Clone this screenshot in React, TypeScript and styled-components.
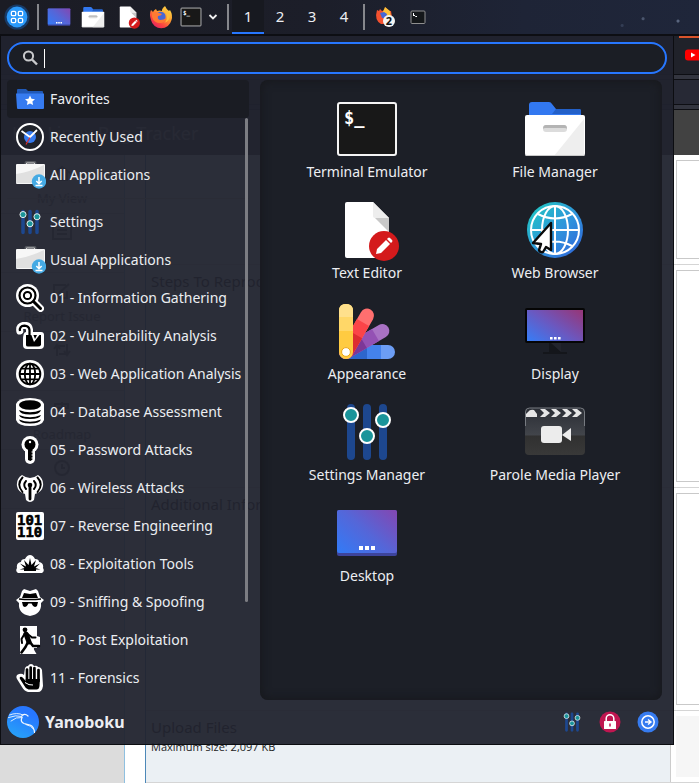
import React from 'react';
import styled, { createGlobalStyle, css } from 'styled-components';

const GlobalStyle = createGlobalStyle`
  *, *::before, *::after { box-sizing: border-box; }
  html, body { margin: 0; padding: 0; }
  body { background: #ffffff; font-family: 'Noto Sans', 'Open Sans', sans-serif; font-size: 14px; color: #eceef2; }
  button, input, textarea { font: inherit; color: inherit; }
`;

/* ---------- desktop shell ---------- */

const Desktop = styled.div`
  display: flex;
  flex-direction: column;
  min-height: 100vh;
  overflow: hidden;
`;

const Stage = styled.div`
  display: grid;
  grid-template-columns: minmax(0, 1fr);
  flex: 1;
  > * { grid-area: 1 / 1; }
`;

const resetButton = css`
  display: flex;
  align-items: center;
  border: 0;
  margin: 0;
  padding: 0;
  background: none;
  cursor: pointer;
`;

/* ---------- top panel ---------- */

const TopPanel = styled.header`
  display: flex;
  align-items: center;
  height: 36px;
  padding: 0 0 0 4px;
  border-bottom: 2px solid #0d0e13;
  background:
    radial-gradient(circle at 92% 55%, #4a556d 0 1px, transparent 2px),
    radial-gradient(circle at 97% 62%, #59657e 0 1px, transparent 2px),
    radial-gradient(circle at 89% 75%, #333d54 0 1px, transparent 2px),
    linear-gradient(90deg, #1b1c24 0%, #1c1e29 45%, #1e2436 75%, #1f263a 100%);
`;

const PanelButton = styled.button<{ $w: number }>`
  ${resetButton}
  justify-content: center;
  width: ${(p) => p.$w}px;
  height: 34px;
`;

const PanelDivider = styled.span<{ $gap: number }>`
  width: 2px;
  height: 26px;
  margin: 0 ${(p) => p.$gap}px;
  background: #86878c;
`;

const Workspace = styled.button<{ $active?: boolean }>`
  ${resetButton}
  justify-content: center;
  align-self: flex-start;
  width: 32px;
  height: 34px;
  font-size: 15px;
  border-bottom: 2px solid ${(p) => (p.$active ? '#2777ff' : 'transparent')};
  background: ${(p) => (p.$active ? '#171920' : 'transparent')};
`;

const Workspaces = styled.nav`
  display: flex;
`;

/* ---------- web page under the menu ---------- */

const Page = styled.div`
  display: flex;
  flex-direction: column;
  color: #2b2b2b;
  background: #ffffff;
  font-size: 15px;
`;

const TabStrip = styled.div`
  display: flex;
  justify-content: flex-end;
  height: 39px;
  border-bottom: 1px solid #0d0e13;
  background: #20222a;
`;

const BrowserTab = styled.div`
  display: flex;
  align-items: center;
  width: 20px;
  padding: 0 0 3px 6px;
  border-top: 2px solid #d8532c;
  overflow: hidden;
  svg { flex: none; }
`;

const ToolStrip = styled.div`
  padding: 4px 0;
  background: #33353f;
  border-bottom: 1px solid #0d0e13;
`;

const AddressBar = styled.div`
  height: 26px;
  border: 1px solid #0d0e13;
  border-width: 1px 0;
  background: #272935;
`;

const SiteHeader = styled.div`
  display: flex;
  align-items: center;
  height: 45px;
  padding-left: 12px;
  background: #424242;
  color: #a0a0a0;
  font-size: 18px;
`;

const SiteBody = styled.div`
  display: grid;
  grid-template-columns: 125px minmax(0, 1fr);
  column-gap: 20px;
  flex: 1;
`;

const SiteNav = styled.nav`
  display: flex;
  flex-direction: column;
  border-right: 1px solid #8fc0e0;
  background: #dcdcdc;
`;

const SiteLink = styled.a`
  display: flex;
  flex-direction: column;
  align-items: center;
  gap: 6px;
  height: 59px;
  padding-top: 9px;
  border-bottom: 1px solid #c4c4c4;
  color: #777777;
  font-size: 13px;
  line-height: 20px;
  text-decoration: none;
`;

const Form = styled.div`
  display: flex;
  flex-direction: column;
  border-left: 1px solid #4d88b8;
`;

const FormRow = styled.div<{ $h?: number }>`
  display: grid;
  grid-template-columns: minmax(0, 1fr) 28px;
  ${(p) => (p.$h ? `height: ${p.$h}px;` : 'flex: 1;')}
  border-bottom: 1px solid #d5d5d5;
`;

const FormLabel = styled.label`
  padding: 5px;
  border-right: 1px solid #cccccc;
  background: #ebf0f4;
  line-height: 22px;
`;

const Hint = styled.small`
  display: block;
  color: #222222;
  font: 11px/18px 'Open Sans', sans-serif;
`;

const FieldCell = styled.div`
  display: flex;
  padding: 5px 0 5px 5px;
  overflow: hidden;
`;

const Field = styled.textarea`
  flex: none;
  width: 60px;
  border: 1px solid #c9c9c9;
  background: #ffffff;
  resize: none;
`;

const DropArea = styled.div`
  flex: 1;
  background: #f6f6f6;
`;

/* ---------- menu window ---------- */

const MenuWindow = styled.section`
  position: relative;
  align-self: start;
  display: flex;
  flex-direction: column;
  margin-right: 25px;
  padding: 6px 6px 0;
  border: 1px solid #0c0d11;
  border-top: 0;
  background: rgba(33, 35, 46, 0.95);
`;

const SearchBox = styled.label`
  display: flex;
  align-items: center;
  height: 32px;
  padding: 0 12px 0 13px;
  border: 2px solid #2777ff;
  border-radius: 16px;
  background: #1b1e25;
`;

const Caret = styled.span`
  width: 1px;
  height: 19px;
  margin-left: 6px;
  background: #ffffff;
`;

const SearchInput = styled.input`
  flex: 1;
  min-width: 0;
  border: 0;
  outline: 0;
  padding: 0;
  background: transparent;
`;

const MenuBody = styled.div`
  display: grid;
  grid-template-columns: 242px minmax(0, 1fr);
  column-gap: 11px;
  margin-top: 6px;
  padding-right: 5px;
`;

const Categories = styled.nav`
  display: grid;
  grid-template-columns: minmax(0, 1fr) 4px;
`;

const CategoryList = styled.div`
  grid-area: 1 / 1 / 2 / 3;
  display: flex;
  flex-direction: column;
`;

const Category = styled.button<{ $selected?: boolean }>`
  ${resetButton}
  gap: 6px;
  height: 38px;
  padding: 0 0 0 9px;
  border-radius: 4px;
  line-height: 20px;
  white-space: nowrap;
  background: ${(p) => (p.$selected ? '#1a1c23' : 'transparent')};
  svg { flex: none; }
`;

const Rule = styled.hr`
  width: 100%;
  height: 1px;
  margin: 4px 0;
  border: 0;
  background: #2a2c36;
`;

const ScrollThumb = styled.span`
  grid-area: 1 / 2;
  width: 3px;
  height: 484px;
  margin-top: 38px;
  border-radius: 2px;
  background: #7c7d83;
`;

const AppPanel = styled.div`
  display: grid;
  grid-template-columns: repeat(2, minmax(0, 1fr));
  align-content: start;
  min-height: 620px;
  padding: 9px 13px;
  border-radius: 8px;
  background: #1c1f27;
  box-shadow: inset 0 0 10px 1px #17181c;
`;

const AppTile = styled.button`
  ${resetButton}
  flex-direction: column;
  height: 101px;
  padding-top: 8px;
  line-height: 22px;
  svg { flex: none; }
`;

const MenuFooter = styled.footer`
  display: flex;
  align-items: center;
  height: 44px;
`;

const UserButton = styled.button`
  ${resetButton}
  gap: 6px;
  font-size: 16px;
  font-weight: 700;
  margin-right: auto;
`;

const ActionButton = styled.button`
  ${resetButton}
  justify-content: center;
  width: 38px;
  height: 38px;
`;

/* ---------- shared drawings ---------- */

type IconProps = { size?: number };

const Svg = ({ size = 28, box = 28, children }: { size?: number; box?: number; children: React.ReactNode }) => (
  <svg width={size} height={size} viewBox={`0 0 ${box} ${box}`} fill="none" aria-hidden="true">
    {children}
  </svg>
);

const DesktopIcon = ({ size = 64 }: IconProps) => (
  <Svg size={size} box={64}>
    <defs>
      <linearGradient id={`desk${size}`} x1="0" y1="0.9" x2="1" y2="0.1">
        <stop offset="0" stopColor="#3579f4" />
        <stop offset="0.5" stopColor="#5566d8" />
        <stop offset="1" stopColor="#8049b4" />
      </linearGradient>
    </defs>
    <rect x="2" y="9" width="60" height="46" rx="2" fill="#3d449c" />
    <rect x="2" y="9" width="60" height="43" rx="2" fill={`url(#desk${size})`} />
    <path d="M24 45h4v4h-4zM30 45h4v4h-4zM36 45h4v4h-4z" fill="#fff" />
  </Svg>
);

const FolderIcon = ({ size = 64 }: IconProps) => (
  <Svg size={size} box={64}>
    <path d="M6 30V8q0-3 3-3h17q2 0 3 2l4 5h23q2 0 2 2v16z" fill="#3278f0" />
    <path d="M33 12h23q2 0 2 2v3H29z" fill="#2360c8" />
    <rect x="2" y="18" width="60" height="41" rx="2" fill="#fff" />
    <path d="M61 22v35q0 2-2 2H31z" fill="#eeeeee" />
    <path d="M2 57q0 2 2 2h56q2 0 2-2v-1q0 2-2 2H4q-2 0-2-2z" fill="#c9c9c9" />
    <rect x="20" y="28" width="24" height="7" rx="3" fill="#dcdcdc" />
    <path d="M20 32q0-4 3-4h18q3 0 3 4q0-1-3-1H23q-3 0-3 1z" fill="#b4b4b4" />
  </Svg>
);

const EditorIcon = ({ size = 64 }: IconProps) => (
  <Svg size={size} box={64}>
    <path d="M10 6q0-2 2-2h26l16 16v38q0 2-2 2H12q-2 0-2-2z" fill="#fff" />
    <path d="M38 18l16 16V20H40z" fill="#c8c8c8" />
    <path d="M38 4l16 16H40q-2 0-2-2z" fill="#ededed" />
    <circle cx="49" cy="48" r="15" fill="#d41a1c" />
    <path d="M41 56l1-5 9-9 4 4-9 9zM52 41l1-1q1-1 2 0l2 2q1 1 0 2l-1 1z" fill="#fff" />
  </Svg>
);

const TerminalIcon = ({ size = 64 }: IconProps) => (
  <Svg size={size} box={64}>
    <rect x="3" y="6" width="58" height="52" rx="2" fill="#181818" stroke="#f4f4f4" strokeWidth="2" />
    <text x="9" y="27" fill="#fff" fontFamily="'DejaVu Sans Mono', monospace" fontWeight="700" fontSize="17">$_</text>
  </Svg>
);

const WebIcon = () => (
  <Svg size={64} box={64}>
    <defs>
      <linearGradient id="web" x1="0" y1="0" x2="1" y2="1">
        <stop offset="0.1" stopColor="#22c3c4" />
        <stop offset="0.55" stopColor="#2f93dc" />
        <stop offset="1" stopColor="#2f5fd8" />
      </linearGradient>
    </defs>
    <circle cx="32" cy="32" r="28" fill="url(#web)" />
    <g stroke="#fff" strokeWidth="2">
      <circle cx="32" cy="32" r="24" />
      <ellipse cx="32" cy="32" rx="13" ry="24" />
      <path d="M32 8v48M8 32h48M15 16q17 9 34 0M15 48q17-9 34 0" />
    </g>
    <path d="M28 25V52l-5-3-3 5q-3 1-4-2l2-6-8-1z" fill="#fff" stroke="#0a0a0a" strokeWidth="2.4" strokeLinejoin="round" />
  </Svg>
);

const AppearanceIcon = () => (
  <Svg size={64} box={64}>
    <rect x="4" y="46" width="56" height="14" rx="7" fill="#6c9df4" />
    <path d="M11 46h35v14H11z" fill="#4482ec" />
    <path d="M11 46h21v14H11z" fill="#2d66cc" />
    <g transform="rotate(60 11 53)">
      <rect x="4" y="4" width="14" height="56" rx="7" fill="#a972c4" />
      <path d="M4 19h14v34H4z" fill="#9451b4" />
      <path d="M4 33h14v20H4z" fill="#7c3797" />
    </g>
    <g transform="rotate(30 11 53)">
      <rect x="4" y="4" width="14" height="56" rx="7" fill="#ff6f6f" />
      <path d="M4 19h14v34H4z" fill="#fb4448" />
      <path d="M4 33h14v20H4z" fill="#dd2c30" />
    </g>
    <rect x="4" y="5" width="14" height="55" rx="7" fill="#ffcb41" />
    <path d="M4 32V12q0-7 7-7t7 7v20z" fill="#ffd768" />
    <path d="M4 18v-6q0-7 7-7t7 7v6z" fill="#ffe08c" />
    <circle cx="11" cy="53" r="4.4" fill="#fff" stroke="#eda718" strokeWidth="1" />
  </Svg>
);

const DisplayIcon = () => (
  <Svg size={64} box={64}>
    <defs>
      <linearGradient id="disp" x1="0" y1="0.9" x2="1" y2="0.1">
        <stop offset="0" stopColor="#3b7af2" />
        <stop offset="0.5" stopColor="#6c57be" />
        <stop offset="1" stopColor="#94387c" />
      </linearGradient>
    </defs>
    <path d="M26 43h12v10h6v2H20v-2h6z" fill="#14161b" />
    <path d="M28 44l10 9v-9z" fill="#22242c" />
    <rect x="2" y="9" width="60" height="35" rx="2" fill="#050505" />
    <rect x="4" y="11" width="56" height="31" fill="url(#disp)" />
    <path d="M27 38h2.600v2.600H27zM31 38h2.600v2.600H31zM35 38h2.600v2.600H35z" fill="#fff" />
  </Svg>
);

const SlidersIcon = ({ size = 64 }: IconProps) => (
  <Svg size={size} box={64}>
    <path d="M16 8v48M32 8v48M48 8v48" stroke="#1d478e" strokeWidth="8" strokeLinecap="round" />
    <g fill="#1a949a" stroke="#fff" strokeWidth="2">
      <circle cx="16" cy="15" r="7" />
      <circle cx="32" cy="36" r="7" />
      <circle cx="48" cy="20" r="7" />
    </g>
  </Svg>
);

const ParoleIcon = () => (
  <Svg size={64} box={64}>
    <defs>
      <linearGradient id="clap" x1="0" y1="0" x2="0" y2="1">
        <stop offset="0" stopColor="#2b2e35" />
        <stop offset="0.58" stopColor="#42454b" />
        <stop offset="0.59" stopColor="#303030" />
        <stop offset="1" stopColor="#393939" />
      </linearGradient>
    </defs>
    <rect x="2" y="8" width="60" height="47" rx="4" fill="url(#clap)" />
    <path d="M2.500 26V12q0-4 4-4h51q4 0 4 4v14" stroke="#777b81" strokeWidth="1" />
    <path d="M3 17v-3q1-1 2-2 2-3 6-2l3 4v3z" fill="#e6e6e6" />
    <path d="M17 9h5l5 4-5 4h-5l4-4zM28 9h5l5 4-5 4h-5l4-4zM39 9h5l5 4-5 4h-5l4-4zM49 9h5l5 4-5 4h-5l4-4z" fill="#e6e6e6" />
    <rect x="18" y="26" width="21" height="17" rx="3" fill="#ececec" />
    <path d="M39 35l9-7v13z" fill="#ececec" />
  </Svg>
);

const FirefoxIcon = ({ size = 24 }: IconProps) => (
  <Svg size={size} box={24}>
    <defs>
      <linearGradient id={`fox${size}`} x1="0.85" y1="0.05" x2="0.2" y2="0.95">
        <stop offset="0" stopColor="#ffe04a" />
        <stop offset="0.4" stopColor="#ff9a2e" />
        <stop offset="0.75" stopColor="#fb4340" />
        <stop offset="1" stopColor="#e32463" />
      </linearGradient>
    </defs>
    <path d="M2 5l2 2q1-2 3-3l1 2q3-1 5 0 0-3 3-5 1 3 4 5l1-1q3 5 1.500 10A10.500 10.500 0 0 1 2 15Q0 9 2 5z" fill={`url(#fox${size})`} />
    <path d="M8 8q5-3 8 1 2 5-2 7-5 1-7-3-1-3 1-5z" fill="#4a68d4" />
    <path d="M3 8q4-2 7 0l3 1q-1 2-4 2-1 3 2 4 4 0 6-2-1 5-6 5-6 0-8-6z" fill="#ff7a33" />
    <path d="M13 6q5 1 5 6 0 4-3 6 6-2 6-8-1-3-5-8-3 1-3 4z" fill="#ffbe3b" />
  </Svg>
);

const LauncherIcon = () => (
  <Svg size={30} box={30}>
    <circle cx="15" cy="15" r="14.500" fill="#1572e0" opacity="0.35" />
    <circle cx="15" cy="15" r="12" fill="#2b9afb" />
    <g stroke="#fff" strokeWidth="1.500" fill="#238af0">
      <rect x="8.500" y="8.500" width="5" height="5" rx="1.500" />
      <rect x="16.500" y="8.500" width="5" height="5" rx="1.500" />
      <rect x="8.500" y="16.500" width="5" height="5" rx="1.500" />
      <rect x="16.500" y="16.500" width="5" height="5" rx="1.500" />
    </g>
  </Svg>
);

const ChevronIcon = () => (
  <Svg size={10} box={10}>
    <path d="M1.500 3L5 6.500 8.500 3" stroke="#f0f0f0" strokeWidth="1.800" />
  </Svg>
);

const FirefoxTaskIcon = () => (
  <Svg size={22} box={22}>
    <path d="M3 4l2 1 1-2 2 2 3-1V1l4 4 2 0 1 6-5 7-6 0Q0 14 3 4z" fill="#f4512f" />
    <path d="M11 1l5 4 1 6-5 3-4-6z" fill="#ffc039" />
    <path d="M6 7l4-1 3 2-1 4H8z" fill="#4566d6" />
    <circle cx="15" cy="15" r="6" fill="#f4f4f4" />
    <text x="15" y="19" textAnchor="middle" fill="#111" fontFamily="'Noto Sans', sans-serif" fontWeight="700" fontSize="11">2</text>
  </Svg>
);

const TerminalTaskIcon = () => (
  <Svg size={16} box={16}>
    <rect x="1" y="2" width="14" height="12.500" rx="1" fill="#14171a" stroke="#8f8f8f" />
    <path d="M3.500 4v3M3.500 5.500l2 2h1.500" stroke="#fff" />
  </Svg>
);

const YoutubeIcon = () => (
  <svg width="16" height="12" viewBox="0 0 16 12" aria-hidden="true">
    <rect width="16" height="11" y="0.500" rx="3" fill="#fe0000" />
    <path d="M6 3.500l4.500 2.500L6 8.500z" fill="#fff" />
  </svg>
);

const SearchIcon = () => (
  <Svg size={16} box={16}>
    <circle cx="6.500" cy="6" r="4.600" stroke="#c9cacc" strokeWidth="2" />
    <path d="M10 9.500l5 5" stroke="#c9cacc" strokeWidth="2.400" />
  </Svg>
);

const LockIcon = () => (
  <Svg size={22} box={22}>
    <circle cx="11" cy="11" r="10.500" fill="#bf1650" />
    <path d="M7.200 10V7.500a3.800 3.800 0 0 1 7.600 0V10" stroke="#fff" strokeWidth="1.500" />
    <rect x="5" y="10" width="12" height="8" rx="0.500" fill="#fff" />
    <path d="M11 12.500v3" stroke="#bf1650" strokeWidth="1.500" />
  </Svg>
);

const LogoutIcon = () => (
  <Svg size={22} box={22}>
    <circle cx="11" cy="11" r="10.500" fill="#367bf0" />
    <circle cx="11" cy="11" r="6.200" stroke="#fff" strokeWidth="1.500" />
    <path d="M8 11h5M11 8.500l3 2.500-3 2.500" stroke="#fff" strokeWidth="1.400" />
  </Svg>
);

const AvatarIcon = () => (
  <Svg size={32} box={32}>
    <defs>
      <linearGradient id="ava" x1="0.7" y1="0" x2="0.2" y2="1">
        <stop offset="0.2" stopColor="#2777ff" />
        <stop offset="1" stopColor="#27a4f8" />
      </linearGradient>
    </defs>
    <circle cx="16" cy="16" r="16" fill="url(#ava)" />
    <g stroke="#f2f8ff" strokeWidth="0.900" strokeLinecap="round">
      <path d="M2.500 9Q10 6 16 9M1.500 11.500Q9 8.500 15 10.500M4 15Q9 10.500 15 11.500" />
      <path d="M15 9.500q3-2.500 6 .5M15 11.500q-2 4.500 2 6 3 1 6 1.500 4 1.500 4.500 7.500" strokeWidth="1.200" />
      <path d="M19 18.500q5 1 7.500 4.500" />
    </g>
  </Svg>
);

/* ---------- category drawings ---------- */

const FavoritesIcon = () => (
  <Svg>
    <path d="M1 9V5q0-1 1-1h8l2 2h14q1 0 1 1v4z" fill="#2059b8" />
    <path d="M0 8.500h28V23q0 1-1 1H2q-1 0-1-1z" fill="#367bf0" />
    <path d="M14 10.500l1.500 3.300 3.500.4-2.600 2.400.7 3.500L14 18.400l-3.100 1.700.7-3.500L9 14.200l3.500-.4z" fill="#fff" />
  </Svg>
);

const RecentIcon = () => (
  <Svg>
    <circle cx="14" cy="14" r="13" fill="#20232b" stroke="#fff" strokeWidth="2" />
    <circle cx="14" cy="14" r="6" fill="#367bf0" />
    <path d="M5.500 8L14 14l7-7" stroke="#fff" strokeWidth="1.800" />
    <path d="M14 14.500l-4 7" stroke="#e0322c" strokeWidth="1.200" />
  </Svg>
);

const CaseIcon = () => (
  <Svg size={30} box={30}>
    <path d="M9.500 5.500V3q0-1 1-1h8q1 0 1 1v2.500" stroke="#55585f" strokeWidth="2" />
    <path d="M10.500 5V3h8v2" stroke="#d5d5d5" strokeWidth="1" />
    <rect x="0" y="4" width="29" height="20" rx="1" fill="#f7f7f7" />
    <path d="M0 14q14-2 28-9v18H0z" fill="#e0e0e0" />
    <circle cx="23" cy="21.500" r="7.200" fill="#45aae4" />
    <path d="M23 17v6.500M20.300 21l2.700 2.700 2.700-2.700M19.500 25.500h7" stroke="#fff" strokeWidth="1.500" />
  </Svg>
);

const GatheringIcon = () => (
  <Svg>
    <path d="M17 17l7.500 7.500" stroke="#fff" strokeWidth="7" strokeLinecap="round" />
    <circle cx="11.500" cy="11.500" r="11.500" fill="#fff" />
    <circle cx="11.500" cy="11.500" r="8" stroke="#000" strokeWidth="2.200" />
    <circle cx="11.500" cy="11.500" r="3.600" stroke="#000" strokeWidth="2" />
    <path d="M17.500 17.500l7 7" stroke="#000" strokeWidth="3" strokeLinecap="round" />
  </Svg>
);

const VulnIcon = () => (
  <Svg>
    <path d="M3.800 9q-1-5.500 4.700-5.700 4.500 0 5 4.200V12" stroke="#fff" strokeWidth="7" strokeLinecap="round" />
    <path d="M10 10h15q3 0 3 3v10q0 4-4 4H11q-4 0-4-4v-5q0-8 3-8z" fill="#fff" />
    <path d="M4 9q-1-5 4.500-5.300Q13 4 13.500 8v5" stroke="#000" strokeWidth="2.200" />
    <path d="M10 13h15v10q-1 1.500-3 1.500H12q-2 0-2-1.500z" fill="#000" />
    <path d="M15 12l3 8 7-9-4 2-2 4-2-5z" fill="#fff" />
  </Svg>
);

const GlobeIcon = () => (
  <Svg>
    <circle cx="14" cy="14" r="14" fill="#fff" />
    <g stroke="#000" strokeWidth="1.800">
      <circle cx="14" cy="14" r="10.400" />
      <ellipse cx="14" cy="14" rx="5.200" ry="10.400" />
      <path d="M14 3.500v21M3.500 14h21M5.500 8.700h17M5.500 19.300h17" />
    </g>
  </Svg>
);

const DatabaseIcon = () => (
  <Svg>
    <path d="M0 6Q2 0 14 0t14 6v16q-2 6-14 6T0 22z" fill="#fff" />
    <ellipse cx="14" cy="7" rx="11" ry="4.800" fill="#000" />
    <path d="M3 12q11 4.500 22 0-1 4.500-11 4.500T3 12zM3 17q11 4.500 22 0-1 4-11 4T3 17zM3 21.500q11 4.500 22 0-1 4-11 4t-11-4z" fill="#000" />
  </Svg>
);

const KeyIcon = () => (
  <Svg>
    <circle cx="14" cy="8.500" r="8.500" fill="#fff" />
    <path d="M14 10v13" stroke="#fff" strokeWidth="10" strokeLinecap="round" />
    <circle cx="14" cy="8.500" r="5.500" fill="#000" />
    <path d="M12 12h4.500v11.500L14.500 25 12 24z" fill="#000" />
    <circle cx="14" cy="6" r="1.200" fill="#fff" />
    <path d="M17 16h-1.500M17 19h-1.500M17 22h-1.500" stroke="#fff" strokeWidth="1" />
  </Svg>
);

const WirelessIcon = () => (
  <Svg>
    <path d="M6 1q8 6 16 0 6 4 5 11-1 6-8 8l-1 6q-4 4-8 0l-1-6q-7-2-8-8Q0 5 6 1z" fill="#fff" />
    <path d="M14 12v13" stroke="#000" strokeWidth="2.800" strokeLinecap="round" />
    <circle cx="14" cy="11" r="2.300" fill="#000" />
    <path d="M10 7q-3.500 4 0 8M18 7q3.500 4 0 8M6.500 3.500q-6.500 7 0 14.500M21.500 3.500q6.500 7 0 14.500" stroke="#000" strokeWidth="1.900" strokeLinecap="round" />
  </Svg>
);

const BinaryIcon = () => (
  <Svg>
    <rect width="28" height="28" rx="2" fill="#fff" />
    <g fill="#000" stroke="#000" strokeWidth="0.600" fontFamily="'DejaVu Sans Mono', monospace" fontWeight="700" fontSize="14">
      <text x="1" y="12.500">101</text>
      <text x="1" y="24.500">110</text>
    </g>
  </Svg>
);

const ExploitIcon = () => (
  <Svg>
    <path d="M2 23q-3-2-1-5-1-5 4-6 0-3 4-3 2-4 5-4t5 4q4 0 4 3 5 1 4 6 2 3-1 5z" fill="#fff" />
    <path d="M14 8l1.500 7L20 10l-2 6.500 6-3-4.500 4.500 5 1.500H20v1.500H8v-1.500H3.500l5-1.500L4 13.500l6 3L8 10l4.500 5z" fill="#000" />
  </Svg>
);

const SpoofIcon = () => (
  <Svg>
    <path d="M6 3l2-2 6 2 6-2 2 2 2 6 4 3-3 3q1 11-11 13Q2 26 3 15l-3-3 4-3z" fill="#fff" />
    <path d="M8 5l6 1 6-1 2 5H6z" fill="#000" />
    <path d="M3 11q11 1 22 0" stroke="#000" strokeWidth="1.500" />
    <path d="M6 14h16l-1 4q-3 3-5.500-2.500h-3Q10 21 7 18z" fill="#000" />
  </Svg>
);

const ExitIcon = () => (
  <Svg>
    <path d="M4 0h17v10l3 1v9h-3v2h-3l-1 6H4z" fill="#fff" />
    <circle cx="9" cy="3.800" r="2.400" fill="#000" />
    <path d="M10 8l3 8" stroke="#000" strokeWidth="5" strokeLinecap="round" />
    <path d="M8.500 8L5.500 13l.5 4M11 7.500l5 4 3.500 0" stroke="#000" strokeWidth="2" strokeLinecap="round" strokeLinejoin="round" />
    <path d="M12 16l-2.500 5-4 5.500M13.500 15.500l3.500 4.500h6" stroke="#000" strokeWidth="2.600" strokeLinecap="round" strokeLinejoin="round" />
    <path d="M17 22l-.5 6h4z" fill="#fff" />
  </Svg>
);

const HandIcon = () => (
  <Svg>
    <path d="M9 4q1-2 3-2 1-2 3-2t3 2q3-1 4 1 3 0 4 3l1 16q-1 6-5 6H12q-4-1-6-5l-5-8q-2-4 2-5 3-1 5 1z" fill="#fff" />
    <g stroke="#000" strokeWidth="2.700" strokeLinecap="round">
      <path d="M11 5.500V16M14.700 3.500V16M18.400 4V16M22.500 6V17" />
    </g>
    <path d="M9.700 15h14.200l-.4 7q-.5 3.500-3 3.500h-8Q9 24 7.500 20.500L4 15q-1-2 1-2.300 1.500 0 4.700 4.300z" fill="#000" />
    <path d="M9 18.500q4 3 8 2.500" stroke="#fff" strokeWidth="1" />
  </Svg>
);

const CategorySliders = () => <SlidersIcon size={28} />;

/* ---------- page glyphs ---------- */

const PageGlyph = ({ d }: { d: string }) => (
  <svg width="20" height="18" viewBox="0 0 20 18" fill="none" stroke="#777777" strokeWidth="2" aria-hidden="true">
    <path d={d} />
  </svg>
);

const siteLinks = [
  { name: 'My View', labelled: true, d: 'M2 9l8-6 8 6M5 8v8h10V8' },
  { name: 'View Issues', labelled: false, d: 'M1 2h18v14H1zM5 7h10M5 11h10' },
  { name: 'Report Issue', labelled: true, d: 'M14 3H2v13h13V9M7 11l10-9' },
  { name: 'Change Log', labelled: false, d: 'M5 15V5h8M2 8l3-4 3 4M15 3v10H7M12 10l3 4 3-4' },
  { name: 'Roadmap', labelled: true, d: 'M10 2v14M3 4h13v4H3z' },
  { name: 'Summary', labelled: false, d: 'M10 2a7 7 0 1 1 0 14a7 7 0 1 1 0-14M10 5v4h3' },
];

const topCategories = [
  { label: 'Favorites', Icon: FavoritesIcon },
  { label: 'Recently Used', Icon: RecentIcon },
  { label: 'All Applications', Icon: CaseIcon },
];

const categories = [
  { label: 'Settings', Icon: CategorySliders },
  { label: 'Usual Applications', Icon: CaseIcon },
  { label: '01 - Information Gathering', Icon: GatheringIcon },
  { label: '02 - Vulnerability Analysis', Icon: VulnIcon },
  { label: '03 - Web Application Analysis', Icon: GlobeIcon },
  { label: '04 - Database Assessment', Icon: DatabaseIcon },
  { label: '05 - Password Attacks', Icon: KeyIcon },
  { label: '06 - Wireless Attacks', Icon: WirelessIcon },
  { label: '07 - Reverse Engineering', Icon: BinaryIcon },
  { label: '08 - Exploitation Tools', Icon: ExploitIcon },
  { label: '09 - Sniffing & Spoofing', Icon: SpoofIcon },
  { label: '10 - Post Exploitation', Icon: ExitIcon },
  { label: '11 - Forensics', Icon: HandIcon },
];

const apps = [
  { label: 'Terminal Emulator', Icon: TerminalIcon },
  { label: 'File Manager', Icon: FolderIcon },
  { label: 'Text Editor', Icon: EditorIcon },
  { label: 'Web Browser', Icon: WebIcon },
  { label: 'Appearance', Icon: AppearanceIcon },
  { label: 'Display', Icon: DisplayIcon },
  { label: 'Settings Manager', Icon: SlidersIcon },
  { label: 'Parole Media Player', Icon: ParoleIcon },
  { label: 'Desktop', Icon: DesktopIcon },
];

const IconSlot = styled.span`
  display: flex;
  width: 28px;
  flex: none;
  overflow: visible;
`;

function CategoryButton({ label, Icon, selected }: { label: string; Icon: React.ComponentType; selected?: boolean }) {
  return (
    <Category type="button" $selected={selected} aria-pressed={!!selected}>
      <IconSlot>
        <Icon />
      </IconSlot>
      {label}
    </Category>
  );
}

function BrowserPage() {
  return (
    <Page>
      <TabStrip>
        <BrowserTab>
          <YoutubeIcon />
        </BrowserTab>
      </TabStrip>
      <ToolStrip>
        <AddressBar />
      </ToolStrip>
      <SiteHeader>Kali Linux Bug Tracker</SiteHeader>
      <SiteBody>
        <SiteNav>
          {siteLinks.map((l) => (
            <SiteLink href="#" key={l.name} aria-label={l.name}>
              <PageGlyph d={l.d} />
              {l.labelled && l.name}
            </SiteLink>
          ))}
        </SiteNav>
        <Form>
          <FormRow $h={110}>
            <FormLabel htmlFor="description" />
            <FieldCell>
              <Field id="description" />
            </FieldCell>
          </FormRow>
          <FormRow $h={223}>
            <FormLabel htmlFor="steps">Steps To Reproduce</FormLabel>
            <FieldCell>
              <Field id="steps" />
            </FieldCell>
          </FormRow>
          <FormRow $h={223}>
            <FormLabel htmlFor="info">Additional Information</FormLabel>
            <FieldCell>
              <Field id="info" />
            </FieldCell>
          </FormRow>
          <FormRow>
            <FormLabel>
              Upload Files
              <Hint>Maximum size: 2,097 KB</Hint>
            </FormLabel>
            <FieldCell>
              <DropArea />
            </FieldCell>
          </FormRow>
        </Form>
      </SiteBody>
    </Page>
  );
}

export default function App() {
  return (
    <>
      <GlobalStyle />
      <Desktop>
        <TopPanel>
          <PanelButton $w={26} aria-label="Applications">
            <LauncherIcon />
          </PanelButton>
          <PanelDivider $gap={7} />
          <PanelButton $w={26} aria-label="Show desktop">
            <DesktopIcon size={24} />
          </PanelButton>
          <PanelButton $w={42} aria-label="File manager">
            <FolderIcon size={24} />
          </PanelButton>
          <PanelButton $w={28} aria-label="Text editor">
            <EditorIcon size={24} />
          </PanelButton>
          <PanelButton $w={38} aria-label="Firefox">
            <FirefoxIcon />
          </PanelButton>
          <PanelButton $w={22} aria-label="Terminal">
            <TerminalIcon size={24} />
          </PanelButton>
          <PanelButton $w={22} aria-label="More terminals">
            <ChevronIcon />
          </PanelButton>
          <PanelDivider $gap={3} />
          <Workspaces>
            <Workspace $active>1</Workspace>
            <Workspace>2</Workspace>
            <Workspace>3</Workspace>
            <Workspace>4</Workspace>
          </Workspaces>
          <PanelDivider $gap={3} />
          <PanelButton $w={34} aria-label="Firefox windows">
            <FirefoxTaskIcon />
          </PanelButton>
          <PanelButton $w={32} aria-label="Terminal window">
            <TerminalTaskIcon />
          </PanelButton>
        </TopPanel>
        <Stage>
          <BrowserPage />
          <MenuWindow>
            <SearchBox>
              <SearchIcon />
              <Caret />
              <SearchInput type="text" aria-label="Search applications" />
            </SearchBox>
            <MenuBody>
              <Categories>
                <CategoryList>
                  {topCategories.map((c, i) => (
                    <CategoryButton key={c.label} {...c} selected={i === 0} />
                  ))}
                  <Rule />
                  {categories.map((c) => (
                    <CategoryButton key={c.label} {...c} />
                  ))}
                </CategoryList>
                <ScrollThumb />
              </Categories>
              <AppPanel>
                {apps.map(({ label, Icon }) => (
                  <AppTile type="button" key={label}>
                    <Icon />
                    {label}
                  </AppTile>
                ))}
              </AppPanel>
            </MenuBody>
            <MenuFooter>
              <UserButton type="button">
                <AvatarIcon />
                Yanoboku
              </UserButton>
              <ActionButton type="button" aria-label="Settings">
                <SlidersIcon size={22} />
              </ActionButton>
              <ActionButton type="button" aria-label="Lock screen">
                <LockIcon />
              </ActionButton>
              <ActionButton type="button" aria-label="Log out">
                <LogoutIcon />
              </ActionButton>
            </MenuFooter>
          </MenuWindow>
        </Stage>
      </Desktop>
    </>
  );
}
